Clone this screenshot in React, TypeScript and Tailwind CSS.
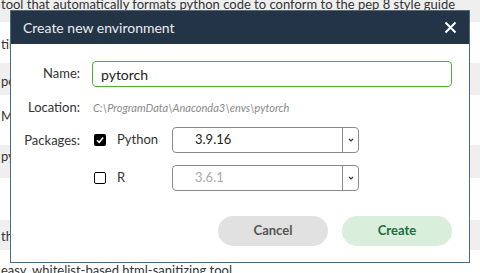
import { useState } from "react";

type BgRow = {
  text: string;
  height: string;
  shade: boolean;
  pad: string;
};

const rows: BgRow[] = [
  { text: "tool that automatically formats python code to conform to the pep 8 style guide", height: "h-[22px]", shade: true, pad: "-mt-[5px]" },
  { text: "tilities", height: "h-[41px]", shade: false, pad: "pt-[13px]" },
  { text: "pep", height: "h-[32px]", shade: true, pad: "pt-[9px]" },
  { text: "Mock", height: "h-[50px]", shade: false, pad: "pt-[12px]" },
  { text: "python", height: "h-[33px]", shade: true, pad: "pt-[2px]" },
  { text: "", height: "h-[42px]", shade: false, pad: "" },
  { text: "the", height: "h-[30px]", shade: true, pad: "pt-[7px]" },
  { text: "easy, whitelist-based html-sanitizing tool", height: "h-[23px]", shade: false, pad: "pt-[11px]" },
];

function Chevron() {
  return (
    <svg width="8" height="6" viewBox="0 0 8 6" className="text-[#333]">
      <polyline points="2,2 4,4 6,2" fill="none" stroke="currentColor" strokeWidth="1.2" />
    </svg>
  );
}

function Checkbox({ checked }: { checked: boolean }) {
  return checked ? (
    <span className="flex h-[12px] w-[12px] items-center justify-center rounded-[2px] bg-black">
      <svg width="10" height="10" viewBox="0 0 10 10">
        <polyline points="2,5.2 4.2,7.3 8.2,2.6" fill="none" stroke="white" strokeWidth="1.5" />
      </svg>
    </span>
  ) : (
    <span className="block h-[12px] w-[12px] rounded-[2px] border-[1.5px] border-black bg-white" />
  );
}

function VersionSelect({ value, muted }: { value: string; muted?: boolean }) {
  return (
    <div className="flex h-[26px] w-[187px] items-stretch rounded-[4px] border border-[#8a8a8a] bg-white">
      <div className={`flex flex-1 items-center pl-[22px] text-[13px] ${muted ? "text-[#a8a8a8]" : "text-[#222]"}`}>
        {value}
      </div>
      <div className="flex w-[16px] items-center justify-center border-l border-[#8a8a8a]">
        <Chevron />
      </div>
    </div>
  );
}

function PackageRow({ name, value, checked, muted }: { name: string; value: string; checked: boolean; muted?: boolean }) {
  return (
    <div className="flex items-center">
      <div className="flex w-[80px] items-center gap-[11px] pl-[2px]">
        <Checkbox checked={checked} />
        <span className="text-[13px] text-[#333]">{name}</span>
      </div>
      <VersionSelect value={value} muted={muted} />
    </div>
  );
}

export default function App() {
  const [name, setName] = useState("pytorch");

  return (
    <div className="relative h-[273px] w-[480px] overflow-hidden bg-white font-['Lato',sans-serif] text-[13px] text-[#333]">
      <div className="flex flex-col">
        {rows.map((row, i) => (
          <div
            key={i}
            className={`overflow-hidden ${row.height} ${row.shade ? "bg-[#efefef]" : "bg-white"}`}
          >
            <div className={`whitespace-nowrap pl-[1px] ${row.pad}`}>{row.text}</div>
          </div>
        ))}
      </div>

      <div className="absolute left-[10px] top-[10px] flex h-[253px] w-[460px] flex-col border border-[#4e6a80] bg-white">
        <div className="flex h-[33px] items-center justify-between bg-[#243447] pl-[12px] pr-[12px]">
          <span className="text-[14px] text-[#e8ecef]">Create new environment</span>
          <svg width="13" height="13" viewBox="0 0 13 13">
            <path d="M1.5 1.5 L11.5 11.5 M11.5 1.5 L1.5 11.5" stroke="white" strokeWidth="2" />
          </svg>
        </div>

        <div className="flex flex-col pr-[17px]">
          <div className="mt-[17px] flex items-center">
            <label className="w-[69px] text-right text-[13px]">Name:</label>
            <input
              value={name}
              onChange={(e) => setName(e.target.value)}
              className="ml-[12px] h-[26px] flex-1 rounded-[4px] border border-[#4cb034] px-[8px] text-[14px] text-[#222] outline-none"
            />
          </div>

          <div className="mt-[13px] flex h-[16px] items-center">
            <span className="w-[69px] text-right text-[13px]">Location:</span>
            <span className="ml-[13px] text-[11px] italic text-[#8a8a8a]">
              C:\ProgramData\Anaconda3\envs\pytorch
            </span>
          </div>

          <div className="mt-[11px] flex items-start">
            <span className="mt-[4px] w-[69px] text-right text-[13px]">Packages:</span>
            <div className="ml-[12px] flex flex-col gap-[12px]">
              <PackageRow name="Python" value="3.9.16" checked />
              <PackageRow name="R" value="3.6.1" checked={false} muted />
            </div>
          </div>

          <div className="mt-[25px] flex justify-end gap-[14px]">
            <button className="h-[30px] w-[110px] rounded-full bg-[#e1e1e1] text-[13px] font-bold text-[#555]">
              Cancel
            </button>
            <button className="h-[30px] w-[110px] rounded-full bg-[#d9eedb] text-[13px] font-bold text-[#1d6b3c]">
              Create
            </button>
          </div>
        </div>
      </div>
    </div>
  );
}
